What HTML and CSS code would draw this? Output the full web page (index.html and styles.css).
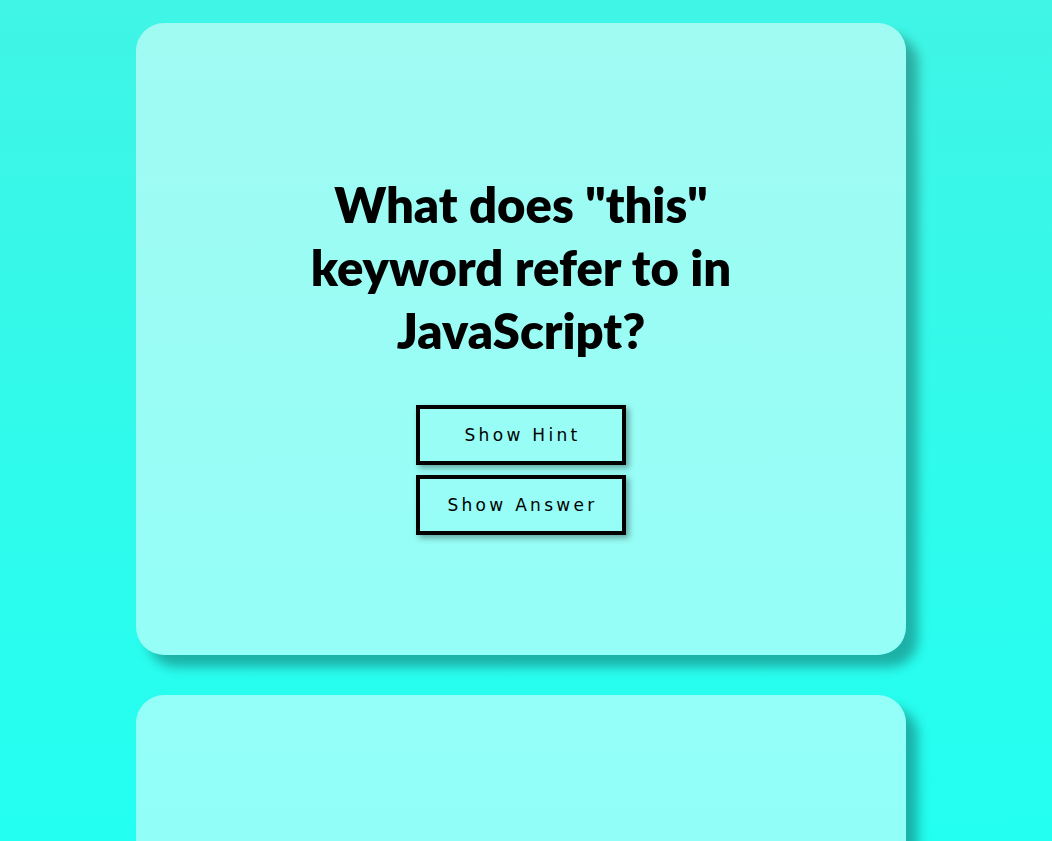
FILE: index.html
```html
<!DOCTYPE html>
<html>
<head>
<meta charset="utf-8">
<link rel="stylesheet" href="styles.css">
</head>
<body>
<main class="deck">
  <section class="card">
    <h1 class="question">What does "this" keyword refer to in JavaScript?</h1>
    <div class="actions">
      <button class="btn">Show Hint</button>
      <button class="btn">Show Answer</button>
    </div>
  </section>
  <section class="card"></section>
</main>
</body>
</html>
```
FILE: styles.css
```css
html, body {
  margin: 0;
  padding: 0;
}
body {
  min-height: 100vh;
  background: linear-gradient(180deg, #40f5e5 0%, #22fff1 100%);
  background-attachment: fixed;
  font-family: "Lato", "Noto Sans", sans-serif;
  overflow: hidden;
}
.deck {
  display: flex;
  flex-direction: column;
  align-items: center;
  gap: 40px;
  padding-top: 23px;
  padding-right: 10px;
}
.card {
  width: 770px;
  height: 632px;
  box-sizing: border-box;
  flex-shrink: 0;
  border-radius: 28px;
  background: rgba(255, 255, 255, 0.5);
  box-shadow: 12px 12px 12px rgba(0, 0, 0, 0.3);
  display: flex;
  flex-direction: column;
  align-items: center;
  padding-top: 150px;
}
.question {
  margin: 0;
  max-width: 440px;
  text-align: center;
  font-size: 49px;
  line-height: 63px;
  font-weight: 800;
  color: #000;
}
.actions {
  margin-top: 43px;
  display: flex;
  flex-direction: column;
  gap: 10px;
}
.btn {
  width: 210px;
  height: 60px;
  box-sizing: border-box;
  border: 4px solid #000;
  background: transparent;
  box-shadow: 3px 3px 6px rgba(0, 0, 0, 0.35);
  font-family: "DejaVu Sans", sans-serif;
  font-size: 17px;
  letter-spacing: 3.3px;
  color: #000;
  padding: 0 0 0 3px;
  cursor: pointer;
}
```
